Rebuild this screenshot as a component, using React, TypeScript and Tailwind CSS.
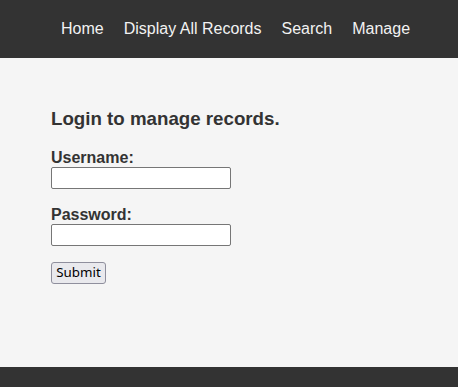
import React from "react";

export default function App() {
  const links = ["Home", "Display All Records", "Search", "Manage"];
  return (
    <div className="w-[458px] h-[387px] flex flex-col bg-[#333333] font-['Liberation_Sans',Arial,sans-serif]">
      <header className="h-[58px] shrink-0 bg-[#333333] flex items-center pl-[51px] pb-px">
        {links.map((l) => (
          <a key={l} href="#" className="px-[10px] text-[16px] leading-[18px] text-[#f2f2f2] no-underline">
            {l}
          </a>
        ))}
      </header>
      <main className="h-[309px] shrink-0 bg-[#f5f5f5] pl-[51px] pt-[50px] text-[#333333]">
        <h3 className="text-[18.72px] leading-[21.5px] font-bold m-0">Login to manage records.</h3>
        <form className="flex flex-col items-start mt-[18.5px]" onSubmit={(e) => e.preventDefault()}>
          <label className="text-[16px] leading-[19px] font-bold">Username:</label>
          <input type="text" className="w-[180px] h-[22px] bg-white border border-[#767676] rounded-[2px]" />
          <label className="text-[16px] leading-[19px] font-bold mt-[16px]">Password:</label>
          <input type="password" className="w-[180px] h-[22px] bg-white border border-[#767676] rounded-[2px]" />
          <button
            type="submit"
            className="mt-[16px] w-[55px] h-[22px] flex items-center justify-center bg-[#e9e9ed] border border-[#8f8f9d] rounded-[3px] text-[13.33px] text-black font-['Noto_Sans','Open_Sans',sans-serif] leading-none"
          >
            Submit
          </button>
        </form>
      </main>
      <footer className="flex-1 bg-[#333333]" />
    </div>
  );
}
